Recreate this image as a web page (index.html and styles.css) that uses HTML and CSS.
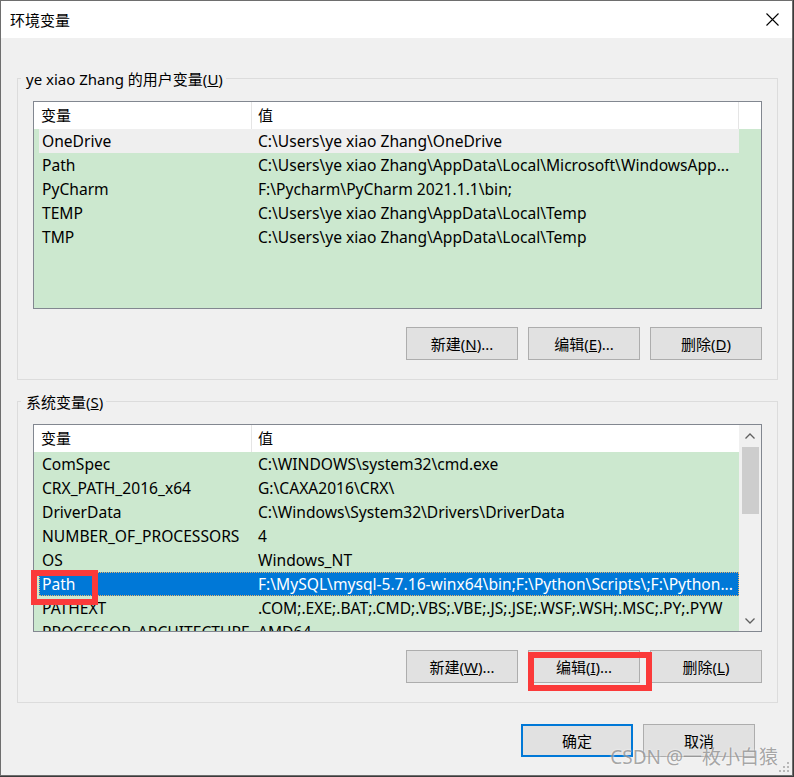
FILE: index.html
```html
<!DOCTYPE html>
<html lang="zh-CN">
<head>
<meta charset="utf-8">
<title>环境变量</title>
<link rel="stylesheet" href="styles.css">
</head>
<body>
<div class="window">
  <div class="titlebar">
    <span class="title">环境变量</span>
    <svg class="close" width="13" height="13" viewBox="0 0 13 13"><path d="M0.5 0.5 L12.5 12.5 M12.5 0.5 L0.5 12.5" stroke="#000" stroke-width="1.1" fill="none"/></svg>
  </div>
  <div class="content">
    <div class="group">
      <div class="group-label">ye xiao Zhang 的用户变量(<u>U</u>)</div>
      <div class="list">
        <div class="list-main">
          <div class="list-header"><div class="hc1">变量</div><div class="hc2">值</div><div class="hc3"></div></div>
          <div class="row hover"><div class="c1">OneDrive</div><div class="c2">C:\Users\ye xiao Zhang\OneDrive</div></div>
          <div class="row"><div class="c1">Path</div><div class="c2">C:\Users\ye xiao Zhang\AppData\Local\Microsoft\WindowsApp...</div></div>
          <div class="row"><div class="c1">PyCharm</div><div class="c2">F:\Pycharm\PyCharm 2021.1.1\bin;</div></div>
          <div class="row"><div class="c1">TEMP</div><div class="c2">C:\Users\ye xiao Zhang\AppData\Local\Temp</div></div>
          <div class="row"><div class="c1">TMP</div><div class="c2">C:\Users\ye xiao Zhang\AppData\Local\Temp</div></div>
        </div>
      </div>
      <div class="btn-row">
        <div class="btn">新建(<u>N</u>)...</div>
        <div class="btn">编辑(<u>E</u>)...</div>
        <div class="btn">删除(<u>D</u>)</div>
      </div>
    </div>
    <div class="group second">
      <div class="group-label">系统变量(<u>S</u>)</div>
      <div class="list">
        <div class="list-main">
          <div class="list-header"><div class="hc1">变量</div><div class="hc2 last">值</div></div>
          <div class="row"><div class="c1">ComSpec</div><div class="c2">C:\WINDOWS\system32\cmd.exe</div></div>
          <div class="row"><div class="c1">CRX_PATH_2016_x64</div><div class="c2">G:\CAXA2016\CRX\</div></div>
          <div class="row"><div class="c1">DriverData</div><div class="c2">C:\Windows\System32\Drivers\DriverData</div></div>
          <div class="row"><div class="c1">NUMBER_OF_PROCESSORS</div><div class="c2">4</div></div>
          <div class="row"><div class="c1">OS</div><div class="c2">Windows_NT</div></div>
          <div class="row sel"><div class="c1">Path</div><div class="c2">F:\MySQL\mysql-5.7.16-winx64\bin;F:\Python\Scripts\;F:\Python...</div></div>
          <div class="row"><div class="c1">PATHEXT</div><div class="c2">.COM;.EXE;.BAT;.CMD;.VBS;.VBE;.JS;.JSE;.WSF;.WSH;.MSC;.PY;.PYW</div></div>
          <div class="row"><div class="c1">PROCESSOR_ARCHITECTURE</div><div class="c2">AMD64</div></div>
        </div>
        <div class="scrollbar">
          <div class="sb-btn"><svg width="10" height="6" viewBox="0 0 10 6"><path d="M0.5 5.5 L5 1 L9.5 5.5" stroke="#606060" stroke-width="1.3" fill="none"/></svg></div>
          <div class="sb-thumb"></div>
          <div class="sb-track"></div>
          <div class="sb-btn"><svg width="10" height="6" viewBox="0 0 10 6"><path d="M0.5 0.5 L5 5 L9.5 0.5" stroke="#606060" stroke-width="1.3" fill="none"/></svg></div>
        </div>
      </div>
      <div class="btn-row">
        <div class="btn">新建(<u>W</u>)...</div>
        <div class="btn">编辑(<u>I</u>)...</div>
        <div class="btn">删除(<u>L</u>)</div>
      </div>
    </div>
    <div class="dialog-buttons">
      <div class="btn default">确定</div>
      <div class="btn">取消</div>
    </div>
  </div>
  <div class="mark mark-path"></div>
  <div class="mark mark-edit"></div>
  <div class="watermark">CSDN @一枚小白猿</div>
  <svg class="grip" width="11" height="11" viewBox="0 0 11 11">
    <rect x="8" y="0" width="2" height="2" fill="#b8b8b8"/>
    <rect x="4" y="4" width="2" height="2" fill="#b8b8b8"/><rect x="8" y="4" width="2" height="2" fill="#b8b8b8"/>
    <rect x="0" y="8" width="2" height="2" fill="#b8b8b8"/><rect x="4" y="8" width="2" height="2" fill="#b8b8b8"/><rect x="8" y="8" width="2" height="2" fill="#b8b8b8"/>
  </svg>
</div>
</body>
</html>
```

FILE: styles.css
```css
html, body {
  margin: 0;
  padding: 0;
}
body {
  background: #3b3b3b;
  font-family: "Noto Sans", "Noto Sans CJK SC", sans-serif;
  font-size: 15px;
  color: #000;
}
.window {
  position: relative;
  width: 793px;
  height: 776px;
  box-sizing: border-box;
  border: 1px solid #6e6e6e;
  background: #f0f0f0;
  display: flex;
  flex-direction: column;
}
.titlebar {
  height: 37px;
  flex: none;
  background: #fff;
  display: flex;
  align-items: center;
  justify-content: space-between;
  padding: 0 13px 0 9px;
}
.title {
  line-height: 20px;
}
.close {
  display: block;
}
.content {
  padding: 0 14px 0 16px;
}
.group {
  margin-top: 40px;
  border: 1px solid #dcdcdc;
  padding: 0 15px 19px;
}
.group.second {
  margin-top: 21px;
}
.group-label {
  margin: -10px 0 0 -12px;
  padding: 0 3px 0 5px;
  line-height: 20px;
  background: #f0f0f0;
  width: max-content;
}
.list {
  margin-top: 12px;
  height: 208px;
  box-sizing: border-box;
  border: 1px solid #828790;
  background: #cce8cf;
  display: flex;
  overflow: hidden;
  font-size: 15.6px;
}
.list-main {
  flex: 1;
  min-width: 0;
}
.list-header {
  display: flex;
  height: 27px;
  line-height: 27px;
  background: #fff;
  font-size: 15px;
}
.hc1 {
  width: 218px;
  box-sizing: border-box;
  border-right: 1px solid #e5e5e5;
  padding-left: 7px;
}
.hc2 {
  width: 487px;
  box-sizing: border-box;
  border-right: 1px solid #e5e5e5;
  padding-left: 6px;
}
.hc2.last {
  border-right: none;
}
.hc3 {
  flex: 1;
}
.row {
  display: flex;
  margin-left: 5px;
  width: 700px;
  height: 24px;
  line-height: 24px;
  white-space: nowrap;
  box-sizing: border-box;
}
.row.hover {
  background: #efefef;
}
.row.sel {
  background: #0078d7;
  color: #fff;
  outline: 1px dotted #e8b26a;
  outline-offset: -1px;
}
.c1 {
  width: 212px;
  flex: none;
  box-sizing: border-box;
  padding-left: 3px;
  overflow: hidden;
}
.c2 {
  flex: 1;
  min-width: 0;
  padding-left: 7px;
  overflow: hidden;
}
.scrollbar {
  width: 22px;
  flex: none;
  background: #f0f0f0;
  display: flex;
  flex-direction: column;
  align-items: center;
}
.sb-btn {
  height: 21px;
  width: 100%;
  display: flex;
  align-items: center;
  justify-content: center;
}
.sb-btn svg {
  display: block;
}
.sb-thumb {
  width: 17px;
  height: 67px;
  background: #cdcdcd;
  margin-top: 1px;
}
.sb-track {
  flex: 1;
}
.btn-row {
  display: flex;
  justify-content: flex-end;
  gap: 10px;
  margin-top: 18px;
}
.btn {
  width: 112px;
  height: 33px;
  box-sizing: border-box;
  border: 1px solid #adadad;
  background: #e1e1e1;
  display: flex;
  align-items: center;
  justify-content: center;
  white-space: nowrap;
}
.btn.default {
  border: 2px solid #0078d7;
}
.dialog-buttons {
  display: flex;
  justify-content: flex-end;
  gap: 10px;
  margin-top: 21px;
  padding-right: 23px;
}
.mark {
  position: absolute;
  box-sizing: border-box;
  border: 6px solid #fb3a3a;
}
.mark-path {
  left: 30px;
  top: 569px;
  width: 67px;
  height: 35px;
}
.mark-edit {
  left: 527px;
  top: 651px;
  width: 124px;
  height: 39px;
}
.watermark {
  position: absolute;
  right: 14px;
  bottom: 6px;
  font-size: 19px;
  line-height: 24px;
  color: rgba(110, 110, 110, 0.6);
  text-shadow: 0 0 2px rgba(255, 255, 255, 0.9);
  white-space: nowrap;
}
.grip {
  position: absolute;
  right: 2px;
  bottom: 2px;
}
```
